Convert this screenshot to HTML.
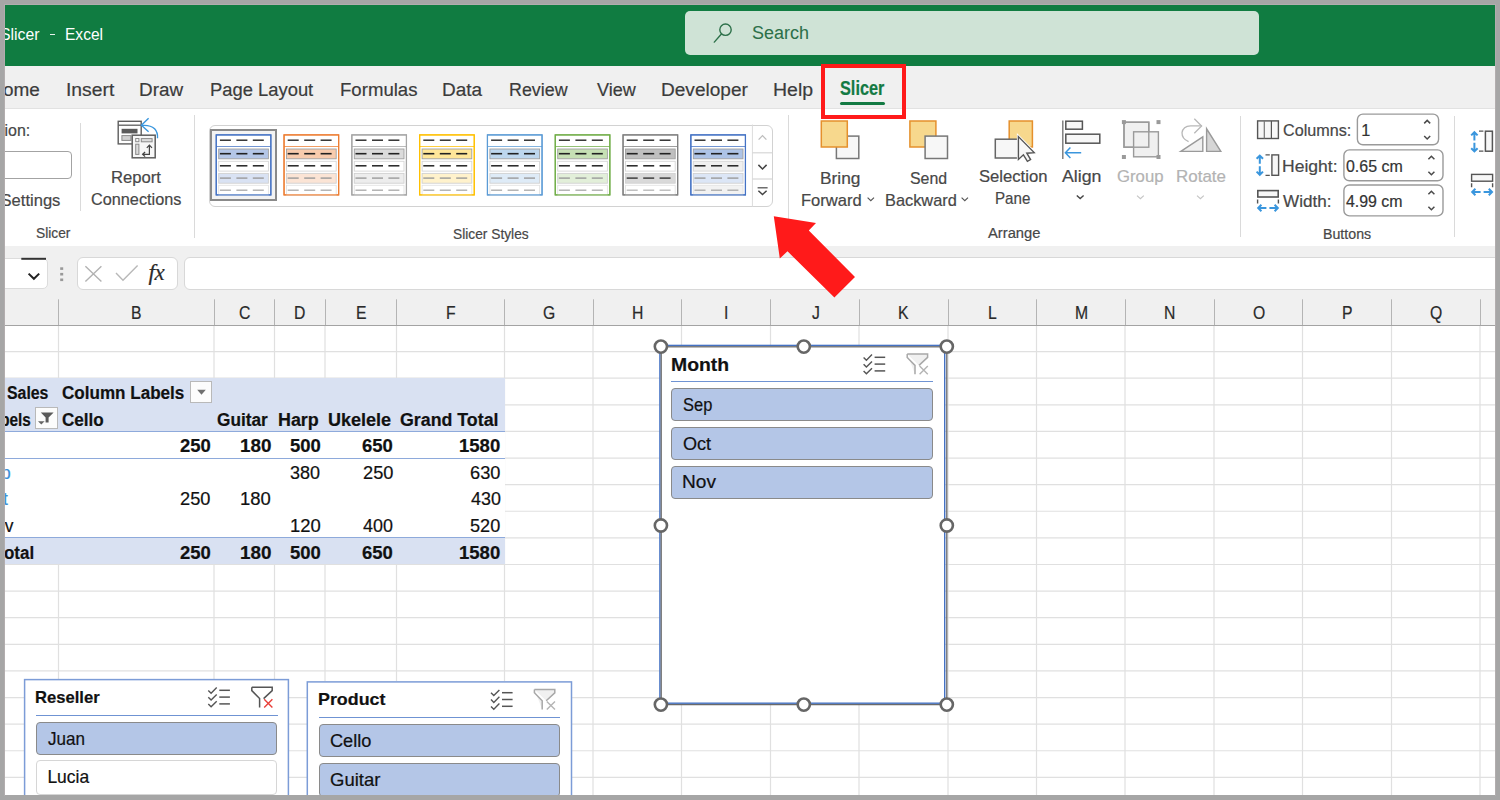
<!DOCTYPE html>
<html><head><meta charset="utf-8"><style>
html,body{margin:0;padding:0;}
body{width:1500px;height:800px;overflow:hidden;background:#a6a6a6;position:relative;font-family:"Liberation Sans",sans-serif;}
#root{position:absolute;left:0;top:0;width:1500px;height:800px;clip-path:inset(5px 5px 5px 5px);background:#fff;overflow:hidden;}
.a{position:absolute;}
.t{position:absolute;white-space:nowrap;font-family:"Liberation Sans",sans-serif;-webkit-text-stroke:0.2px currentColor;}
svg.a{overflow:visible;}
</style></head><body>
<div class="a" style="left:4px;top:4px;width:1492px;height:1px;background:#b2adae"></div>
<div class="a" style="left:4px;top:4px;width:1px;height:792px;background:#b2adae"></div>
<div class="a" style="left:1495px;top:4px;width:1px;height:792px;background:#b2adae"></div>
<div id="root"><div class="a" style="left:0px;top:0px;width:1500px;height:65.5px;background:#107c41"></div><div class="a" style="left:684.5px;top:10.8px;width:574.5px;height:44.6px;background:#cfe3d6;border-radius:5px"></div><svg class="a" style="left:0;top:0" width="1500" height="70"><circle cx="725.5" cy="29.7" r="5.7" fill="none" stroke="#2c7049" stroke-width="1.4"/><line x1="721.4" y1="34" x2="714.3" y2="42.1" stroke="#2c7049" stroke-width="1.4" stroke-linecap="round"/></svg><div class="t" style="left:752.08px;top:23.16px;font-size:19.19px;line-height:19.19px;font-weight:400;color:#2c7049;width:64.79px;transform:scaleX(0.9355);transform-origin:left top;-webkit-text-stroke:0.05px currentColor;">Search</div><div class="t" style="left:0.37px;top:27.05px;font-size:16.72px;line-height:16.72px;font-weight:400;color:#ffffff;width:45.80px;transform:scaleX(0.9474);transform-origin:left top;-webkit-text-stroke:0;">Slicer</div><div class="a" style="left:50px;top:34.2px;width:5px;height:1.3px;background:#e8f2ec"></div><div class="t" style="left:64.65px;top:27.05px;font-size:16.72px;line-height:16.72px;font-weight:400;color:#ffffff;width:44.87px;transform:scaleX(0.9312);transform-origin:left top;-webkit-text-stroke:0;">Excel</div><div class="a" style="left:0px;top:65.5px;width:1500px;height:43.5px;background:#f0f0f0"></div><div class="a" style="left:0px;top:108px;width:1500px;height:1px;background:#e2e2e2"></div><div class="t" style="left:3.24px;top:79.76px;font-size:19.19px;line-height:19.19px;font-weight:400;color:#3b3b3b;width:41.32px;transform:scaleX(0.9895);transform-origin:left top;">ome</div><div class="t" style="left:65.76px;top:79.76px;font-size:19.19px;line-height:19.19px;font-weight:400;color:#3b3b3b;width:51.98px;transform:scaleX(1.0057);transform-origin:left top;">Insert</div><div class="t" style="left:138.99px;top:79.76px;font-size:19.19px;line-height:19.19px;font-weight:400;color:#3b3b3b;width:48.77px;transform:scaleX(0.9848);transform-origin:left top;">Draw</div><div class="t" style="left:210.03px;top:79.76px;font-size:19.19px;line-height:19.19px;font-weight:400;color:#3b3b3b;width:111.74px;transform:scaleX(0.9578);transform-origin:left top;">Page Layout</div><div class="t" style="left:339.81px;top:79.76px;font-size:19.19px;line-height:19.19px;font-weight:400;color:#3b3b3b;width:83.95px;transform:scaleX(0.9692);transform-origin:left top;">Formulas</div><div class="t" style="left:442.48px;top:79.76px;font-size:19.19px;line-height:19.19px;font-weight:400;color:#3b3b3b;width:44.52px;transform:scaleX(0.9888);transform-origin:left top;">Data</div><div class="t" style="left:509.47px;top:79.76px;font-size:19.19px;line-height:19.19px;font-weight:400;color:#3b3b3b;width:66.91px;transform:scaleX(0.9304);transform-origin:left top;">Review</div><div class="t" style="left:596.60px;top:79.76px;font-size:19.19px;line-height:19.19px;font-weight:400;color:#3b3b3b;width:45.24px;transform:scaleX(0.9411);transform-origin:left top;">View</div><div class="t" style="left:661.28px;top:79.76px;font-size:19.19px;line-height:19.19px;font-weight:400;color:#3b3b3b;width:91.45px;transform:scaleX(0.9933);transform-origin:left top;">Developer</div><div class="t" style="left:773.04px;top:79.76px;font-size:19.19px;line-height:19.19px;font-weight:400;color:#3b3b3b;width:43.46px;transform:scaleX(1.0156);transform-origin:left top;">Help</div><div class="t" style="left:840.17px;top:79.37px;font-size:19.77px;line-height:19.77px;font-weight:700;color:#137a43;width:57.85px;transform:scaleX(0.8237);transform-origin:left top;">Slicer</div><div class="a" style="left:840px;top:101.8px;width:45px;height:3.2px;background:#137a43;border-radius:2px"></div><div class="a" style="left:0px;top:109px;width:1500px;height:137px;background:#ffffff"></div><div class="t" style="left:-29.30px;top:123.17px;font-size:15.99px;line-height:15.99px;font-weight:400;color:#474747;width:63.55px;">Caption:</div><div class="a" style="left:-20px;top:151.1px;width:91.8px;height:28.4px;border:1px solid #a3a3a3;border-radius:4px;box-sizing:border-box;background:#fff"></div><div class="t" style="left:-45.48px;top:193.07px;font-size:16.57px;line-height:16.57px;font-weight:400;color:#474747;width:109.90px;">Slicer Settings</div><div class="a" style="left:80.2px;top:123px;width:1px;height:87.6px;background:#dadada"></div><svg class="a" style="left:110px;top:114px" width="52" height="50" viewBox="110 114 52 50">
<rect x="118.2" y="121.3" width="23" height="22.6" fill="#fff" stroke="#5e5e5e" stroke-width="1.4"/>
<line x1="118.2" y1="125.2" x2="141.2" y2="125.2" stroke="#5e5e5e" stroke-width="1.3"/>
<rect x="121.6" y="128.8" width="15.9" height="4.6" fill="#5a5a5a"/>
<rect x="121.9" y="135.6" width="9" height="4.8" fill="#d0d0d0" stroke="#8a8a8a" stroke-width="1"/>
<rect x="132.2" y="135.2" width="23" height="22.6" fill="#f7f7f7" stroke="#5e5e5e" stroke-width="1.5"/>
<rect x="135.7" y="138.5" width="3.2" height="3.2" fill="none" stroke="#8a8a8a" stroke-width="1"/>
<rect x="141.3" y="138.6" width="10.8" height="3.2" fill="#ddd" stroke="#8a8a8a" stroke-width="1"/>
<rect x="135.7" y="144.2" width="3.2" height="10.2" fill="#ddd" stroke="#8a8a8a" stroke-width="1"/>
<path d="M143 154.3 L149.4 154.3 L149.4 145.4 M146.8 147.8 L149.4 145.1 L152 147.8 M145.1 152 L142.6 154.3 L145.1 156.6" fill="none" stroke="#444" stroke-width="1.2"/>
<path d="M141.6 125.5 Q150 124.6 154.6 128.8 Q158 132.5 157.5 138.3" fill="none" stroke="#3a96dd" stroke-width="1.4"/>
<path d="M148.6 118.2 L141.4 125.3 L148.6 131.8" fill="none" stroke="#3a96dd" stroke-width="1.4"/>
</svg><div class="t" style="left:110.72px;top:168.70px;font-size:16.42px;line-height:16.42px;font-weight:400;color:#474747;width:53.29px;transform:scaleX(1.0154);transform-origin:left top;">Report</div><div class="t" style="left:90.59px;top:190.50px;font-size:16.42px;line-height:16.42px;font-weight:400;color:#474747;width:95.30px;transform:scaleX(0.9910);transform-origin:left top;">Connections</div><div class="t" style="left:35.65px;top:226.30px;font-size:14.53px;line-height:14.53px;font-weight:400;color:#474747;width:40.34px;transform:scaleX(0.9492);transform-origin:left top;">Slicer</div><div class="a" style="left:194.3px;top:115.3px;width:1px;height:122.5px;background:#dadada"></div><div class="a" style="left:208.9px;top:124.5px;width:564px;height:82.1px;border:1px solid #d2d2d2;border-radius:6px;box-sizing:border-box;background:#fff"></div><div class="a" style="left:210px;top:129px;width:67px;height:72px;border:2px solid #8a8a8a;box-sizing:border-box;background:#f3f3f3"></div><svg class="a" style="left:200px;top:120px" width="600" height="90" viewBox="200 120 600 90"><rect x="216.25" y="134.9" width="54.60" height="60" fill="#fff" stroke="#4472c4" stroke-width="1.15"/><line x1="216.25" y1="146.5" x2="270.85" y2="146.5" stroke="#4472c4" stroke-width="1" opacity="0.75"/><rect x="218.70" y="149.00" width="49.70" height="9.8" fill="#b4c6e7" stroke="#a0a0a0" stroke-width="0.9"/><rect x="218.70" y="161.30" width="49.70" height="9.8" fill="#ffffff" stroke="#d6d6d6" stroke-width="0.9"/><rect x="218.70" y="173.40" width="49.70" height="9.8" fill="#d9e2f3" stroke="#d0d0d0" stroke-width="0.9"/><rect x="218.70" y="185.30" width="49.70" height="10.0" fill="#ffffff" stroke="#e3e3e3" stroke-width="0.9"/><line x1="219.90" y1="140.2" x2="230.90" y2="140.2" stroke="#222" stroke-width="1.4"/><line x1="236.40" y1="140.2" x2="247.40" y2="140.2" stroke="#222" stroke-width="1.4"/><line x1="252.80" y1="140.2" x2="263.80" y2="140.2" stroke="#222" stroke-width="1.4"/><line x1="219.90" y1="153.7" x2="230.90" y2="153.7" stroke="#222" stroke-width="1.6"/><line x1="236.40" y1="153.7" x2="247.40" y2="153.7" stroke="#222" stroke-width="1.6"/><line x1="252.80" y1="153.7" x2="263.80" y2="153.7" stroke="#222" stroke-width="1.6"/><line x1="219.90" y1="165.8" x2="230.90" y2="165.8" stroke="#222" stroke-width="1.5"/><line x1="236.40" y1="165.8" x2="247.40" y2="165.8" stroke="#222" stroke-width="1.5"/><line x1="252.80" y1="165.8" x2="263.80" y2="165.8" stroke="#222" stroke-width="1.5"/><line x1="219.90" y1="178.1" x2="230.90" y2="178.1" stroke="#9a9a9a" stroke-width="1.4"/><line x1="236.40" y1="178.1" x2="247.40" y2="178.1" stroke="#9a9a9a" stroke-width="1.4"/><line x1="252.80" y1="178.1" x2="263.80" y2="178.1" stroke="#9a9a9a" stroke-width="1.4"/><line x1="219.90" y1="190.2" x2="230.90" y2="190.2" stroke="#a8a8a8" stroke-width="1.3"/><line x1="236.40" y1="190.2" x2="247.40" y2="190.2" stroke="#a8a8a8" stroke-width="1.3"/><line x1="252.80" y1="190.2" x2="263.80" y2="190.2" stroke="#a8a8a8" stroke-width="1.3"/><rect x="216.25" y="134.9" width="54.60" height="60" fill="none" stroke="#4472c4" stroke-width="1.15"/><rect x="284.05" y="134.9" width="54.60" height="60" fill="#fff" stroke="#ed7d31" stroke-width="1.15"/><line x1="284.05" y1="146.5" x2="338.65" y2="146.5" stroke="#ed7d31" stroke-width="1" opacity="0.75"/><rect x="286.50" y="149.00" width="49.70" height="9.8" fill="#f8cbad" stroke="#a0a0a0" stroke-width="0.9"/><rect x="286.50" y="161.30" width="49.70" height="9.8" fill="#ffffff" stroke="#d6d6d6" stroke-width="0.9"/><rect x="286.50" y="173.40" width="49.70" height="9.8" fill="#fbe4d5" stroke="#d0d0d0" stroke-width="0.9"/><rect x="286.50" y="185.30" width="49.70" height="10.0" fill="#ffffff" stroke="#e3e3e3" stroke-width="0.9"/><line x1="287.70" y1="140.2" x2="298.70" y2="140.2" stroke="#222" stroke-width="1.4"/><line x1="304.20" y1="140.2" x2="315.20" y2="140.2" stroke="#222" stroke-width="1.4"/><line x1="320.60" y1="140.2" x2="331.60" y2="140.2" stroke="#222" stroke-width="1.4"/><line x1="287.70" y1="153.7" x2="298.70" y2="153.7" stroke="#222" stroke-width="1.6"/><line x1="304.20" y1="153.7" x2="315.20" y2="153.7" stroke="#222" stroke-width="1.6"/><line x1="320.60" y1="153.7" x2="331.60" y2="153.7" stroke="#222" stroke-width="1.6"/><line x1="287.70" y1="165.8" x2="298.70" y2="165.8" stroke="#222" stroke-width="1.5"/><line x1="304.20" y1="165.8" x2="315.20" y2="165.8" stroke="#222" stroke-width="1.5"/><line x1="320.60" y1="165.8" x2="331.60" y2="165.8" stroke="#222" stroke-width="1.5"/><line x1="287.70" y1="178.1" x2="298.70" y2="178.1" stroke="#9a9a9a" stroke-width="1.4"/><line x1="304.20" y1="178.1" x2="315.20" y2="178.1" stroke="#9a9a9a" stroke-width="1.4"/><line x1="320.60" y1="178.1" x2="331.60" y2="178.1" stroke="#9a9a9a" stroke-width="1.4"/><line x1="287.70" y1="190.2" x2="298.70" y2="190.2" stroke="#a8a8a8" stroke-width="1.3"/><line x1="304.20" y1="190.2" x2="315.20" y2="190.2" stroke="#a8a8a8" stroke-width="1.3"/><line x1="320.60" y1="190.2" x2="331.60" y2="190.2" stroke="#a8a8a8" stroke-width="1.3"/><rect x="284.05" y="134.9" width="54.60" height="60" fill="none" stroke="#ed7d31" stroke-width="1.15"/><rect x="351.85" y="134.9" width="54.60" height="60" fill="#fff" stroke="#a5a5a5" stroke-width="1.15"/><line x1="351.85" y1="146.5" x2="406.45" y2="146.5" stroke="#a5a5a5" stroke-width="1" opacity="0.75"/><rect x="354.30" y="149.00" width="49.70" height="9.8" fill="#dbdbdb" stroke="#a0a0a0" stroke-width="0.9"/><rect x="354.30" y="161.30" width="49.70" height="9.8" fill="#ffffff" stroke="#d6d6d6" stroke-width="0.9"/><rect x="354.30" y="173.40" width="49.70" height="9.8" fill="#ededed" stroke="#d0d0d0" stroke-width="0.9"/><rect x="354.30" y="185.30" width="49.70" height="10.0" fill="#ffffff" stroke="#e3e3e3" stroke-width="0.9"/><line x1="355.50" y1="140.2" x2="366.50" y2="140.2" stroke="#222" stroke-width="1.4"/><line x1="372.00" y1="140.2" x2="383.00" y2="140.2" stroke="#222" stroke-width="1.4"/><line x1="388.40" y1="140.2" x2="399.40" y2="140.2" stroke="#222" stroke-width="1.4"/><line x1="355.50" y1="153.7" x2="366.50" y2="153.7" stroke="#222" stroke-width="1.6"/><line x1="372.00" y1="153.7" x2="383.00" y2="153.7" stroke="#222" stroke-width="1.6"/><line x1="388.40" y1="153.7" x2="399.40" y2="153.7" stroke="#222" stroke-width="1.6"/><line x1="355.50" y1="165.8" x2="366.50" y2="165.8" stroke="#222" stroke-width="1.5"/><line x1="372.00" y1="165.8" x2="383.00" y2="165.8" stroke="#222" stroke-width="1.5"/><line x1="388.40" y1="165.8" x2="399.40" y2="165.8" stroke="#222" stroke-width="1.5"/><line x1="355.50" y1="178.1" x2="366.50" y2="178.1" stroke="#9a9a9a" stroke-width="1.4"/><line x1="372.00" y1="178.1" x2="383.00" y2="178.1" stroke="#9a9a9a" stroke-width="1.4"/><line x1="388.40" y1="178.1" x2="399.40" y2="178.1" stroke="#9a9a9a" stroke-width="1.4"/><line x1="355.50" y1="190.2" x2="366.50" y2="190.2" stroke="#a8a8a8" stroke-width="1.3"/><line x1="372.00" y1="190.2" x2="383.00" y2="190.2" stroke="#a8a8a8" stroke-width="1.3"/><line x1="388.40" y1="190.2" x2="399.40" y2="190.2" stroke="#a8a8a8" stroke-width="1.3"/><rect x="351.85" y="134.9" width="54.60" height="60" fill="none" stroke="#a5a5a5" stroke-width="1.15"/><rect x="419.65" y="134.9" width="54.60" height="60" fill="#fff" stroke="#ffc000" stroke-width="1.15"/><line x1="419.65" y1="146.5" x2="474.25" y2="146.5" stroke="#ffc000" stroke-width="1" opacity="0.75"/><rect x="422.10" y="149.00" width="49.70" height="9.8" fill="#ffe699" stroke="#a0a0a0" stroke-width="0.9"/><rect x="422.10" y="161.30" width="49.70" height="9.8" fill="#ffffff" stroke="#d6d6d6" stroke-width="0.9"/><rect x="422.10" y="173.40" width="49.70" height="9.8" fill="#fff2cc" stroke="#d0d0d0" stroke-width="0.9"/><rect x="422.10" y="185.30" width="49.70" height="10.0" fill="#ffffff" stroke="#e3e3e3" stroke-width="0.9"/><line x1="423.30" y1="140.2" x2="434.30" y2="140.2" stroke="#222" stroke-width="1.4"/><line x1="439.80" y1="140.2" x2="450.80" y2="140.2" stroke="#222" stroke-width="1.4"/><line x1="456.20" y1="140.2" x2="467.20" y2="140.2" stroke="#222" stroke-width="1.4"/><line x1="423.30" y1="153.7" x2="434.30" y2="153.7" stroke="#222" stroke-width="1.6"/><line x1="439.80" y1="153.7" x2="450.80" y2="153.7" stroke="#222" stroke-width="1.6"/><line x1="456.20" y1="153.7" x2="467.20" y2="153.7" stroke="#222" stroke-width="1.6"/><line x1="423.30" y1="165.8" x2="434.30" y2="165.8" stroke="#222" stroke-width="1.5"/><line x1="439.80" y1="165.8" x2="450.80" y2="165.8" stroke="#222" stroke-width="1.5"/><line x1="456.20" y1="165.8" x2="467.20" y2="165.8" stroke="#222" stroke-width="1.5"/><line x1="423.30" y1="178.1" x2="434.30" y2="178.1" stroke="#9a9a9a" stroke-width="1.4"/><line x1="439.80" y1="178.1" x2="450.80" y2="178.1" stroke="#9a9a9a" stroke-width="1.4"/><line x1="456.20" y1="178.1" x2="467.20" y2="178.1" stroke="#9a9a9a" stroke-width="1.4"/><line x1="423.30" y1="190.2" x2="434.30" y2="190.2" stroke="#a8a8a8" stroke-width="1.3"/><line x1="439.80" y1="190.2" x2="450.80" y2="190.2" stroke="#a8a8a8" stroke-width="1.3"/><line x1="456.20" y1="190.2" x2="467.20" y2="190.2" stroke="#a8a8a8" stroke-width="1.3"/><rect x="419.65" y="134.9" width="54.60" height="60" fill="none" stroke="#ffc000" stroke-width="1.15"/><rect x="487.45" y="134.9" width="54.60" height="60" fill="#fff" stroke="#5b9bd5" stroke-width="1.15"/><line x1="487.45" y1="146.5" x2="542.05" y2="146.5" stroke="#5b9bd5" stroke-width="1" opacity="0.75"/><rect x="489.90" y="149.00" width="49.70" height="9.8" fill="#bdd7ee" stroke="#a0a0a0" stroke-width="0.9"/><rect x="489.90" y="161.30" width="49.70" height="9.8" fill="#ffffff" stroke="#d6d6d6" stroke-width="0.9"/><rect x="489.90" y="173.40" width="49.70" height="9.8" fill="#deebf7" stroke="#d0d0d0" stroke-width="0.9"/><rect x="489.90" y="185.30" width="49.70" height="10.0" fill="#ffffff" stroke="#e3e3e3" stroke-width="0.9"/><line x1="491.10" y1="140.2" x2="502.10" y2="140.2" stroke="#222" stroke-width="1.4"/><line x1="507.60" y1="140.2" x2="518.60" y2="140.2" stroke="#222" stroke-width="1.4"/><line x1="524.00" y1="140.2" x2="535.00" y2="140.2" stroke="#222" stroke-width="1.4"/><line x1="491.10" y1="153.7" x2="502.10" y2="153.7" stroke="#222" stroke-width="1.6"/><line x1="507.60" y1="153.7" x2="518.60" y2="153.7" stroke="#222" stroke-width="1.6"/><line x1="524.00" y1="153.7" x2="535.00" y2="153.7" stroke="#222" stroke-width="1.6"/><line x1="491.10" y1="165.8" x2="502.10" y2="165.8" stroke="#222" stroke-width="1.5"/><line x1="507.60" y1="165.8" x2="518.60" y2="165.8" stroke="#222" stroke-width="1.5"/><line x1="524.00" y1="165.8" x2="535.00" y2="165.8" stroke="#222" stroke-width="1.5"/><line x1="491.10" y1="178.1" x2="502.10" y2="178.1" stroke="#9a9a9a" stroke-width="1.4"/><line x1="507.60" y1="178.1" x2="518.60" y2="178.1" stroke="#9a9a9a" stroke-width="1.4"/><line x1="524.00" y1="178.1" x2="535.00" y2="178.1" stroke="#9a9a9a" stroke-width="1.4"/><line x1="491.10" y1="190.2" x2="502.10" y2="190.2" stroke="#a8a8a8" stroke-width="1.3"/><line x1="507.60" y1="190.2" x2="518.60" y2="190.2" stroke="#a8a8a8" stroke-width="1.3"/><line x1="524.00" y1="190.2" x2="535.00" y2="190.2" stroke="#a8a8a8" stroke-width="1.3"/><rect x="487.45" y="134.9" width="54.60" height="60" fill="none" stroke="#5b9bd5" stroke-width="1.15"/><rect x="555.25" y="134.9" width="54.60" height="60" fill="#fff" stroke="#70ad47" stroke-width="1.15"/><line x1="555.25" y1="146.5" x2="609.85" y2="146.5" stroke="#70ad47" stroke-width="1" opacity="0.75"/><rect x="557.70" y="149.00" width="49.70" height="9.8" fill="#c6e0b4" stroke="#a0a0a0" stroke-width="0.9"/><rect x="557.70" y="161.30" width="49.70" height="9.8" fill="#ffffff" stroke="#d6d6d6" stroke-width="0.9"/><rect x="557.70" y="173.40" width="49.70" height="9.8" fill="#e2efd9" stroke="#d0d0d0" stroke-width="0.9"/><rect x="557.70" y="185.30" width="49.70" height="10.0" fill="#ffffff" stroke="#e3e3e3" stroke-width="0.9"/><line x1="558.90" y1="140.2" x2="569.90" y2="140.2" stroke="#222" stroke-width="1.4"/><line x1="575.40" y1="140.2" x2="586.40" y2="140.2" stroke="#222" stroke-width="1.4"/><line x1="591.80" y1="140.2" x2="602.80" y2="140.2" stroke="#222" stroke-width="1.4"/><line x1="558.90" y1="153.7" x2="569.90" y2="153.7" stroke="#222" stroke-width="1.6"/><line x1="575.40" y1="153.7" x2="586.40" y2="153.7" stroke="#222" stroke-width="1.6"/><line x1="591.80" y1="153.7" x2="602.80" y2="153.7" stroke="#222" stroke-width="1.6"/><line x1="558.90" y1="165.8" x2="569.90" y2="165.8" stroke="#222" stroke-width="1.5"/><line x1="575.40" y1="165.8" x2="586.40" y2="165.8" stroke="#222" stroke-width="1.5"/><line x1="591.80" y1="165.8" x2="602.80" y2="165.8" stroke="#222" stroke-width="1.5"/><line x1="558.90" y1="178.1" x2="569.90" y2="178.1" stroke="#9a9a9a" stroke-width="1.4"/><line x1="575.40" y1="178.1" x2="586.40" y2="178.1" stroke="#9a9a9a" stroke-width="1.4"/><line x1="591.80" y1="178.1" x2="602.80" y2="178.1" stroke="#9a9a9a" stroke-width="1.4"/><line x1="558.90" y1="190.2" x2="569.90" y2="190.2" stroke="#a8a8a8" stroke-width="1.3"/><line x1="575.40" y1="190.2" x2="586.40" y2="190.2" stroke="#a8a8a8" stroke-width="1.3"/><line x1="591.80" y1="190.2" x2="602.80" y2="190.2" stroke="#a8a8a8" stroke-width="1.3"/><rect x="555.25" y="134.9" width="54.60" height="60" fill="none" stroke="#70ad47" stroke-width="1.15"/><rect x="623.05" y="134.9" width="54.60" height="60" fill="#fff" stroke="#7f7f7f" stroke-width="1.15"/><line x1="623.05" y1="146.5" x2="677.65" y2="146.5" stroke="#7f7f7f" stroke-width="1" opacity="0.75"/><rect x="625.50" y="149.00" width="49.70" height="9.8" fill="#bfbfbf" stroke="#a0a0a0" stroke-width="0.9"/><rect x="625.50" y="161.30" width="49.70" height="9.8" fill="#ffffff" stroke="#d6d6d6" stroke-width="0.9"/><rect x="625.50" y="173.40" width="49.70" height="9.8" fill="#d9d9d9" stroke="#d0d0d0" stroke-width="0.9"/><rect x="625.50" y="185.30" width="49.70" height="10.0" fill="#ffffff" stroke="#e3e3e3" stroke-width="0.9"/><line x1="626.70" y1="140.2" x2="637.70" y2="140.2" stroke="#222" stroke-width="1.4"/><line x1="643.20" y1="140.2" x2="654.20" y2="140.2" stroke="#222" stroke-width="1.4"/><line x1="659.60" y1="140.2" x2="670.60" y2="140.2" stroke="#222" stroke-width="1.4"/><line x1="626.70" y1="153.7" x2="637.70" y2="153.7" stroke="#222" stroke-width="1.6"/><line x1="643.20" y1="153.7" x2="654.20" y2="153.7" stroke="#222" stroke-width="1.6"/><line x1="659.60" y1="153.7" x2="670.60" y2="153.7" stroke="#222" stroke-width="1.6"/><line x1="626.70" y1="165.8" x2="637.70" y2="165.8" stroke="#222" stroke-width="1.5"/><line x1="643.20" y1="165.8" x2="654.20" y2="165.8" stroke="#222" stroke-width="1.5"/><line x1="659.60" y1="165.8" x2="670.60" y2="165.8" stroke="#222" stroke-width="1.5"/><line x1="626.70" y1="178.1" x2="637.70" y2="178.1" stroke="#333333" stroke-width="1.4"/><line x1="643.20" y1="178.1" x2="654.20" y2="178.1" stroke="#333333" stroke-width="1.4"/><line x1="659.60" y1="178.1" x2="670.60" y2="178.1" stroke="#333333" stroke-width="1.4"/><line x1="626.70" y1="190.2" x2="637.70" y2="190.2" stroke="#b5b5b5" stroke-width="1.3"/><line x1="643.20" y1="190.2" x2="654.20" y2="190.2" stroke="#b5b5b5" stroke-width="1.3"/><line x1="659.60" y1="190.2" x2="670.60" y2="190.2" stroke="#b5b5b5" stroke-width="1.3"/><rect x="623.05" y="134.9" width="54.60" height="60" fill="none" stroke="#7f7f7f" stroke-width="1.15"/><rect x="690.85" y="134.9" width="54.60" height="60" fill="#fff" stroke="#4472c4" stroke-width="1.15"/><line x1="690.85" y1="146.5" x2="745.45" y2="146.5" stroke="#4472c4" stroke-width="1" opacity="0.75"/><rect x="693.30" y="149.00" width="49.70" height="9.8" fill="#adc3e6" stroke="#a0a0a0" stroke-width="0.9"/><rect x="693.30" y="161.30" width="49.70" height="9.8" fill="#f0f0f0" stroke="#d6d6d6" stroke-width="0.9"/><rect x="693.30" y="173.40" width="49.70" height="9.8" fill="#dce6f6" stroke="#d0d0d0" stroke-width="0.9"/><rect x="693.30" y="185.30" width="49.70" height="10.0" fill="#f2f2f2" stroke="#e3e3e3" stroke-width="0.9"/><line x1="694.50" y1="140.2" x2="705.50" y2="140.2" stroke="#222" stroke-width="1.4"/><line x1="711.00" y1="140.2" x2="722.00" y2="140.2" stroke="#222" stroke-width="1.4"/><line x1="727.40" y1="140.2" x2="738.40" y2="140.2" stroke="#222" stroke-width="1.4"/><line x1="694.50" y1="153.7" x2="705.50" y2="153.7" stroke="#222" stroke-width="1.6"/><line x1="711.00" y1="153.7" x2="722.00" y2="153.7" stroke="#222" stroke-width="1.6"/><line x1="727.40" y1="153.7" x2="738.40" y2="153.7" stroke="#222" stroke-width="1.6"/><line x1="694.50" y1="165.8" x2="705.50" y2="165.8" stroke="#222" stroke-width="1.5"/><line x1="711.00" y1="165.8" x2="722.00" y2="165.8" stroke="#222" stroke-width="1.5"/><line x1="727.40" y1="165.8" x2="738.40" y2="165.8" stroke="#222" stroke-width="1.5"/><line x1="694.50" y1="178.1" x2="705.50" y2="178.1" stroke="#9a9a9a" stroke-width="1.4"/><line x1="711.00" y1="178.1" x2="722.00" y2="178.1" stroke="#9a9a9a" stroke-width="1.4"/><line x1="727.40" y1="178.1" x2="738.40" y2="178.1" stroke="#9a9a9a" stroke-width="1.4"/><line x1="694.50" y1="190.2" x2="705.50" y2="190.2" stroke="#a8a8a8" stroke-width="1.3"/><line x1="711.00" y1="190.2" x2="722.00" y2="190.2" stroke="#a8a8a8" stroke-width="1.3"/><line x1="727.40" y1="190.2" x2="738.40" y2="190.2" stroke="#a8a8a8" stroke-width="1.3"/><rect x="690.85" y="134.9" width="54.60" height="60" fill="none" stroke="#4472c4" stroke-width="1.15"/><line x1="752.4" y1="124.5" x2="752.4" y2="206.6" stroke="#dcdcdc" stroke-width="1"/><line x1="752.4" y1="152.8" x2="772.6" y2="152.8" stroke="#d6d6d6" stroke-width="1.2"/><line x1="752.4" y1="179" x2="772.6" y2="179" stroke="#d6d6d6" stroke-width="1.2"/><path d="M758.6 139.6 L762.5 135.6 L766.4 139.6" fill="none" stroke="#bdbdbd" stroke-width="1.3"/><path d="M758.4 164.9 L762.5 169 L766.6 164.9" fill="none" stroke="#444" stroke-width="1.5"/><line x1="757.6" y1="187.8" x2="767.6" y2="187.8" stroke="#555" stroke-width="1.3"/><path d="M758.4 190.8 L762.5 194.6 L766.6 190.8" fill="none" stroke="#444" stroke-width="1.5"/></svg><div class="t" style="left:453.45px;top:226.50px;font-size:14.53px;line-height:14.53px;font-weight:400;color:#474747;width:83.96px;transform:scaleX(0.9477);transform-origin:left top;">Slicer Styles</div><div class="a" style="left:788.1px;top:115.3px;width:1px;height:122.5px;background:#dadada"></div><svg class="a" style="left:790px;top:110px" width="470" height="105" viewBox="790 110 470 105">
<rect x="836.4" y="136.1" width="22.4" height="22.4" fill="#f7f7f7" stroke="#777" stroke-width="1.5"/>
<rect x="821.3" y="121" width="26" height="26" fill="#f7d88d" stroke="#e5902c" stroke-width="1.5"/>
<rect x="909.9" y="121" width="26" height="26" fill="#f7d88d" stroke="#e5902c" stroke-width="1.5"/>
<rect x="925.1" y="136.1" width="22.4" height="22.4" fill="#f7f7f7" stroke="#777" stroke-width="1.5"/>
<rect x="1009.2" y="121" width="23.2" height="26" fill="#f7d88d" stroke="#e5902c" stroke-width="1.5"/>
<rect x="995.3" y="139.2" width="22.6" height="18.8" fill="#f7f7f7" stroke="#666" stroke-width="1.5"/>
<path d="M1018.4 136.6 L1018.4 159.4 L1023.4 154.8 L1027.4 161.4 L1030.6 159.6 L1026.8 153.2 L1034.2 152.6 Z" fill="#f7f7f7" stroke="#fff" stroke-width="3" stroke-linejoin="miter"/>
<path d="M1018.4 136.6 L1018.4 159.4 L1023.4 154.8 L1027.4 161.4 L1030.6 159.6 L1026.8 153.2 L1034.2 152.6 Z" fill="#f7f7f7" stroke="#555" stroke-width="1.4" stroke-linejoin="miter"/>
<line x1="1062.8" y1="120.4" x2="1062.8" y2="159" stroke="#777" stroke-width="1.4"/>
<rect x="1065.8" y="121.2" width="16.6" height="8" fill="#f7f7f7" stroke="#555" stroke-width="1.5"/>
<rect x="1065.8" y="134.2" width="34" height="9" fill="#f7f7f7" stroke="#555" stroke-width="1.5"/>
<path d="M1065.4 152.7 L1081.2 152.7 M1070.4 147.5 L1065.4 152.7 L1070.4 157.9" fill="none" stroke="#3a96dd" stroke-width="1.5"/>
<rect x="1124" y="122.2" width="24.8" height="25" fill="#f0f0f0" stroke="#9a9a9a" stroke-width="1.4"/>
<rect x="1133.6" y="131.8" width="24.8" height="25" fill="#f0f0f0" stroke="none"/><rect x="1124" y="122.2" width="24.8" height="25" fill="none" stroke="#9a9a9a" stroke-width="1.4"/><rect x="1133.6" y="131.8" width="24.8" height="25" fill="none" stroke="#9a9a9a" stroke-width="1.4"/>
<rect x="1121.9" y="120.1" width="4" height="4" fill="#9a9a9a"/><rect x="1156.5" y="120.1" width="4" height="4" fill="#9a9a9a"/>
<rect x="1121.9" y="155" width="4" height="4" fill="#9a9a9a"/><rect x="1156.5" y="155" width="4" height="4" fill="#9a9a9a"/>
<path d="M1180.8 151.4 L1202.8 136.8 L1202.8 151.4 Z" fill="#f0f0f0" stroke="#9a9a9a" stroke-width="1.4" stroke-linejoin="miter"/>
<path d="M1206.6 128.8 L1206.6 151.4 L1220.8 151.4 Z" fill="#d6d6d6" stroke="#9a9a9a" stroke-width="1.4" stroke-linejoin="miter"/>
<path d="M1188.6 141.6 Q1181.8 139 1182 132.6 Q1183 126.2 1190.6 125.8 L1202 125.8" fill="none" stroke="#b8b8b8" stroke-width="1.3"/>
<path d="M1194.3 118.8 L1201.6 126 L1194.3 133.3" fill="none" stroke="#b8b8b8" stroke-width="1.3"/>
<path d="M867.6 197.6 L870.8 200.6 L874 197.6" fill="none" stroke="#555" stroke-width="1.2"/>
<path d="M961.6 197.6 L964.8 200.6 L968 197.6" fill="none" stroke="#555" stroke-width="1.2"/>
<path d="M1076.8 195.4 L1080.2 198.6 L1083.6 195.4" fill="none" stroke="#444" stroke-width="1.4"/>
<path d="M1137 195.6 L1140.4 198.6 L1143.8 195.6" fill="none" stroke="#c4c4c4" stroke-width="1.2"/>
<path d="M1197 195.6 L1200.4 198.6 L1203.8 195.6" fill="none" stroke="#c4c4c4" stroke-width="1.2"/>
</svg><div class="t" style="left:820.21px;top:170.77px;font-size:15.99px;line-height:15.99px;font-weight:400;color:#474747;width:41.32px;transform:scaleX(1.0832);transform-origin:left top;">Bring</div><div class="t" style="left:801.28px;top:192.77px;font-size:15.99px;line-height:15.99px;font-weight:400;color:#474747;width:62.63px;transform:scaleX(1.0347);transform-origin:left top;">Forward</div><div class="t" style="left:910.36px;top:170.77px;font-size:15.99px;line-height:15.99px;font-weight:400;color:#474747;width:41.34px;transform:scaleX(0.9940);transform-origin:left top;">Send</div><div class="t" style="left:884.69px;top:192.77px;font-size:15.99px;line-height:15.99px;font-weight:400;color:#474747;width:74.20px;transform:scaleX(1.0228);transform-origin:left top;">Backward</div><div class="t" style="left:978.93px;top:168.87px;font-size:15.99px;line-height:15.99px;font-weight:400;color:#474747;width:69.77px;transform:scaleX(1.0409);transform-origin:left top;">Selection</div><div class="t" style="left:995.19px;top:190.67px;font-size:15.99px;line-height:15.99px;font-weight:400;color:#474747;width:41.34px;transform:scaleX(0.9466);transform-origin:left top;">Pane</div><div class="t" style="left:1061.50px;top:168.87px;font-size:15.99px;line-height:15.99px;font-weight:400;color:#474747;width:39.55px;transform:scaleX(1.1097);transform-origin:left top;">Align</div><div class="t" style="left:1117.16px;top:168.87px;font-size:15.99px;line-height:15.99px;font-weight:400;color:#b3b3b3;width:48.43px;transform:scaleX(1.0463);transform-origin:left top;">Group</div><div class="t" style="left:1175.64px;top:168.87px;font-size:15.99px;line-height:15.99px;font-weight:400;color:#b3b3b3;width:51.10px;transform:scaleX(1.0608);transform-origin:left top;">Rotate</div><div class="t" style="left:988.00px;top:226.10px;font-size:14.53px;line-height:14.53px;font-weight:400;color:#474747;width:55.71px;transform:scaleX(1.0164);transform-origin:left top;">Arrange</div><div class="a" style="left:1240.4px;top:115.9px;width:1px;height:121.3px;background:#dadada"></div><svg class="a" style="left:1330px;top:105px" width="130" height="120" viewBox="1330 105 130 120"><rect x="1357.4" y="114.1" width="81.2" height="30.7" rx="5.5" fill="#fff" stroke="#9a9a9a" stroke-width="1.4"/><rect x="1343.9" y="149.9" width="99.1" height="30.9" rx="5.5" fill="#fff" stroke="#9a9a9a" stroke-width="1.4"/><rect x="1343.9" y="185" width="99.1" height="30.9" rx="5.5" fill="#fff" stroke="#9a9a9a" stroke-width="1.4"/></svg><div class="t" style="left:1282.59px;top:122.42px;font-size:16.28px;line-height:16.28px;font-weight:400;color:#474747;width:72.75px;transform:scaleX(0.9943);transform-origin:left top;">Columns:</div><div class="t" style="left:1361.36px;top:122.42px;font-size:16.28px;line-height:16.28px;font-weight:400;color:#333;width:13.05px;">1</div><div class="t" style="left:1282.00px;top:157.82px;font-size:16.28px;line-height:16.28px;font-weight:400;color:#474747;width:55.58px;transform:scaleX(1.0770);transform-origin:left top;">Height:</div><div class="t" style="left:1346.22px;top:157.82px;font-size:16.28px;line-height:16.28px;font-weight:400;color:#333;width:61.90px;transform:scaleX(0.9800);transform-origin:left top;">0.65 cm</div><div class="t" style="left:1283.40px;top:193.22px;font-size:16.28px;line-height:16.28px;font-weight:400;color:#474747;width:50.13px;transform:scaleX(1.0521);transform-origin:left top;">Width:</div><div class="t" style="left:1346.38px;top:193.22px;font-size:16.28px;line-height:16.28px;font-weight:400;color:#333;width:61.90px;transform:scaleX(0.9772);transform-origin:left top;">4.99 cm</div><div class="t" style="left:1322.66px;top:226.70px;font-size:14.53px;line-height:14.53px;font-weight:400;color:#474747;width:53.29px;transform:scaleX(0.9775);transform-origin:left top;">Buttons</div><div class="a" style="left:1454.3px;top:115.9px;width:1px;height:121.3px;background:#dadada"></div><svg class="a" style="left:1250px;top:110px" width="250" height="110" viewBox="1250 110 250 110">
<rect x="1257.6" y="120.9" width="20.8" height="17.6" fill="#f7f7f7" stroke="#555" stroke-width="1.4"/>
<line x1="1264.3" y1="120.9" x2="1264.3" y2="138.5" stroke="#777" stroke-width="1.2"/>
<line x1="1271.4" y1="120.9" x2="1271.4" y2="138.5" stroke="#555" stroke-width="1.2"/>
<rect x="1271.9" y="154.9" width="6.7" height="20.4" fill="#f7f7f7" stroke="#555" stroke-width="1.4"/>
<path d="M1265.5 154.9 L1269.8 154.9 M1265.5 175.3 L1269.8 175.3" stroke="#555" stroke-width="1.3"/>
<path d="M1259.8 156 L1259.8 163.8 M1259.8 166.2 L1259.8 174.4 M1256.6 158.8 L1259.8 155.6 L1263 158.8 M1256.6 171.6 L1259.8 174.8 L1263 171.6" fill="none" stroke="#3a96dd" stroke-width="2"/>
<rect x="1257.8" y="190.6" width="20.4" height="6.4" fill="#f7f7f7" stroke="#555" stroke-width="1.6"/>
<path d="M1257.6 199.4 L1257.6 203.4 M1278.4 199.4 L1278.4 203.4" stroke="#555" stroke-width="1.4"/>
<path d="M1258.4 208 L1266.4 208 M1269.4 208 L1277.6 208 M1261.4 204.8 L1258.2 208 L1261.4 211.2 M1274.6 204.8 L1277.8 208 L1274.6 211.2" fill="none" stroke="#3a96dd" stroke-width="2"/>
<rect x="1485.4" y="131.2" width="7" height="20" fill="#f7f7f7" stroke="#555" stroke-width="1.5"/>
<path d="M1479 131.2 L1483.4 131.2 M1479 151.2 L1483.4 151.2" stroke="#555" stroke-width="1.3"/>
<path d="M1474.4 132.6 L1474.4 140.4 M1474.4 142.8 L1474.4 151 M1471.2 135.4 L1474.4 132.2 L1477.6 135.4 M1471.2 148.2 L1474.4 151.4 L1477.6 148.2" fill="none" stroke="#3a96dd" stroke-width="2"/>
<rect x="1471.6" y="174.4" width="21" height="6.8" fill="#f7f7f7" stroke="#555" stroke-width="1.4"/>
<path d="M1471.6 183.2 L1471.6 187.2 M1492.6 183.2 L1492.6 187.2" stroke="#555" stroke-width="1.4"/>
<path d="M1472.4 192 L1480.6 192 M1483.6 192 L1491.8 192 M1475.4 188.8 L1472.2 192 L1475.4 195.2 M1488.8 188.8 L1492 192 L1488.8 195.2" fill="none" stroke="#3a96dd" stroke-width="2"/>
<path d="M1424.2 123.4 L1427.2 120.4 L1430.2 123.4 M1424.2 136 L1427.2 139 L1430.2 136" fill="none" stroke="#4a4a4a" stroke-width="1.5"/>
<path d="M1428.4 159.2 L1431.4 156.2 L1434.4 159.2 M1428.4 171.8 L1431.4 174.8 L1434.4 171.8" fill="none" stroke="#4a4a4a" stroke-width="1.5"/>
<path d="M1428.4 194.2 L1431.4 191.2 L1434.4 194.2 M1428.4 206.8 L1431.4 209.8 L1434.4 206.8" fill="none" stroke="#4a4a4a" stroke-width="1.5"/>
</svg><div class="a" style="left:0px;top:246px;width:1500px;height:79px;background:#f0f0f0"></div><div class="a" style="left:-20px;top:257.5px;width:67.5px;height:31.9px;background:#fff;border:1px solid #dcdcdc;border-radius:5px;box-sizing:border-box"></div><div class="a" style="left:76.5px;top:257.4px;width:101px;height:32.5px;background:#fff;border:1px solid #d8d8d8;border-radius:6px;box-sizing:border-box"></div><div class="a" style="left:183.5px;top:257.4px;width:1400px;height:32.5px;background:#fff;border:1px solid #d8d8d8;border-radius:6px;box-sizing:border-box"></div><svg class="a" style="left:0;top:250px" width="200" height="45" viewBox="0 250 200 45">
<line x1="21.3" y1="258.8" x2="46" y2="258.8" stroke="#333" stroke-width="2"/>
<path d="M28.6 273.6 L33.9 278.8 L39.2 273.6" fill="none" stroke="#222" stroke-width="2"/>
<rect x="60.2" y="267.3" width="3" height="2.6" fill="#999"/><rect x="60.2" y="272.9" width="3" height="2.6" fill="#999"/><rect x="60.2" y="278.5" width="3" height="2.6" fill="#999"/>
<path d="M85.4 266.2 L101.4 281.4 M101.4 266.2 L85.4 281.4" stroke="#b2b2b2" stroke-width="1.4"/>
<path d="M116 273 L123 280.2 L137.6 265.6" fill="none" stroke="#b8b8b8" stroke-width="1.4"/>
</svg><div class="t" style="left:148.5px;top:261px;font-family:'Liberation Serif',serif;font-style:italic;font-size:23px;line-height:23px;color:#2b2b2b;letter-spacing:-0.5px">fx</div><div class="a" style="left:0px;top:325px;width:1500px;height:1px;background:#a3a3a3"></div><svg class="a" style="left:0;top:290px" width="1500" height="40" viewBox="0 290 1500 40"><line x1="58.5" y1="299.3" x2="58.5" y2="325" stroke="#b4b4b4" stroke-width="1"/><line x1="214.5" y1="299.3" x2="214.5" y2="325" stroke="#b4b4b4" stroke-width="1"/><line x1="274.5" y1="299.3" x2="274.5" y2="325" stroke="#b4b4b4" stroke-width="1"/><line x1="325.5" y1="299.3" x2="325.5" y2="325" stroke="#b4b4b4" stroke-width="1"/><line x1="396.5" y1="299.3" x2="396.5" y2="325" stroke="#b4b4b4" stroke-width="1"/><line x1="504.5" y1="299.3" x2="504.5" y2="325" stroke="#b4b4b4" stroke-width="1"/><line x1="593.5" y1="299.3" x2="593.5" y2="325" stroke="#b4b4b4" stroke-width="1"/><line x1="681.5" y1="299.3" x2="681.5" y2="325" stroke="#b4b4b4" stroke-width="1"/><line x1="770.5" y1="299.3" x2="770.5" y2="325" stroke="#b4b4b4" stroke-width="1"/><line x1="859.5" y1="299.3" x2="859.5" y2="325" stroke="#b4b4b4" stroke-width="1"/><line x1="948.5" y1="299.3" x2="948.5" y2="325" stroke="#b4b4b4" stroke-width="1"/><line x1="1036.5" y1="299.3" x2="1036.5" y2="325" stroke="#b4b4b4" stroke-width="1"/><line x1="1125.5" y1="299.3" x2="1125.5" y2="325" stroke="#b4b4b4" stroke-width="1"/><line x1="1214.5" y1="299.3" x2="1214.5" y2="325" stroke="#b4b4b4" stroke-width="1"/><line x1="1302.5" y1="299.3" x2="1302.5" y2="325" stroke="#b4b4b4" stroke-width="1"/><line x1="1391.5" y1="299.3" x2="1391.5" y2="325" stroke="#b4b4b4" stroke-width="1"/><line x1="1480.5" y1="299.3" x2="1480.5" y2="325" stroke="#b4b4b4" stroke-width="1"/></svg><div class="t" style="left:131.34px;top:304.10px;font-size:18.31px;line-height:18.31px;font-weight:400;color:#2a2a2a;width:16.22px;transform:scaleX(0.8600);transform-origin:left top;">B</div><div class="t" style="left:239.02px;top:304.10px;font-size:18.31px;line-height:18.31px;font-weight:400;color:#2a2a2a;width:17.23px;transform:scaleX(0.8600);transform-origin:left top;">C</div><div class="t" style="left:294.37px;top:304.10px;font-size:18.31px;line-height:18.31px;font-weight:400;color:#2a2a2a;width:17.23px;transform:scaleX(0.8600);transform-origin:left top;">D</div><div class="t" style="left:355.76px;top:304.10px;font-size:18.31px;line-height:18.31px;font-weight:400;color:#2a2a2a;width:16.22px;transform:scaleX(0.8600);transform-origin:left top;">E</div><div class="t" style="left:445.90px;top:304.10px;font-size:18.31px;line-height:18.31px;font-weight:400;color:#2a2a2a;width:15.19px;transform:scaleX(0.8600);transform-origin:left top;">F</div><div class="t" style="left:543.37px;top:304.10px;font-size:18.31px;line-height:18.31px;font-weight:400;color:#2a2a2a;width:18.24px;transform:scaleX(0.8600);transform-origin:left top;">G</div><div class="t" style="left:632.10px;top:304.10px;font-size:18.31px;line-height:18.31px;font-weight:400;color:#2a2a2a;width:17.23px;transform:scaleX(0.8600);transform-origin:left top;">H</div><div class="t" style="left:724.39px;top:304.10px;font-size:18.31px;line-height:18.31px;font-weight:400;color:#2a2a2a;width:9.09px;transform:scaleX(0.8600);transform-origin:left top;">I</div><div class="t" style="left:811.88px;top:304.10px;font-size:18.31px;line-height:18.31px;font-weight:400;color:#2a2a2a;width:13.16px;transform:scaleX(0.8600);transform-origin:left top;">J</div><div class="t" style="left:898.27px;top:304.10px;font-size:18.31px;line-height:18.31px;font-weight:400;color:#2a2a2a;width:16.22px;transform:scaleX(0.8600);transform-origin:left top;">K</div><div class="t" style="left:988.05px;top:304.10px;font-size:18.31px;line-height:18.31px;font-weight:400;color:#2a2a2a;width:14.18px;transform:scaleX(0.8600);transform-origin:left top;">L</div><div class="t" style="left:1074.73px;top:304.10px;font-size:18.31px;line-height:18.31px;font-weight:400;color:#2a2a2a;width:19.25px;transform:scaleX(0.8600);transform-origin:left top;">M</div><div class="t" style="left:1164.35px;top:304.10px;font-size:18.31px;line-height:18.31px;font-weight:400;color:#2a2a2a;width:17.23px;transform:scaleX(0.8600);transform-origin:left top;">N</div><div class="t" style="left:1252.79px;top:304.10px;font-size:18.31px;line-height:18.31px;font-weight:400;color:#2a2a2a;width:18.24px;transform:scaleX(0.8600);transform-origin:left top;">O</div><div class="t" style="left:1342.09px;top:304.10px;font-size:18.31px;line-height:18.31px;font-weight:400;color:#2a2a2a;width:16.22px;transform:scaleX(0.8600);transform-origin:left top;">P</div><div class="t" style="left:1430.29px;top:304.10px;font-size:18.31px;line-height:18.31px;font-weight:400;color:#2a2a2a;width:18.24px;transform:scaleX(0.8600);transform-origin:left top;">Q</div><svg class="a" style="left:0;top:320px" width="1500" height="480" viewBox="0 320 1500 480"><line x1="58.5" y1="326" x2="58.5" y2="800" stroke="#e0e0e0" stroke-width="1.2"/><line x1="214" y1="326" x2="214" y2="800" stroke="#e0e0e0" stroke-width="1.2"/><line x1="274.5" y1="326" x2="274.5" y2="800" stroke="#e0e0e0" stroke-width="1.2"/><line x1="325" y1="326" x2="325" y2="800" stroke="#e0e0e0" stroke-width="1.2"/><line x1="396.5" y1="326" x2="396.5" y2="800" stroke="#e0e0e0" stroke-width="1.2"/><line x1="504.5" y1="326" x2="504.5" y2="800" stroke="#e0e0e0" stroke-width="1.2"/><line x1="593" y1="326" x2="593" y2="800" stroke="#e0e0e0" stroke-width="1.2"/><line x1="681.5" y1="326" x2="681.5" y2="800" stroke="#e0e0e0" stroke-width="1.2"/><line x1="770.5" y1="326" x2="770.5" y2="800" stroke="#e0e0e0" stroke-width="1.2"/><line x1="859" y1="326" x2="859" y2="800" stroke="#e0e0e0" stroke-width="1.2"/><line x1="948" y1="326" x2="948" y2="800" stroke="#e0e0e0" stroke-width="1.2"/><line x1="1036.5" y1="326" x2="1036.5" y2="800" stroke="#e0e0e0" stroke-width="1.2"/><line x1="1125" y1="326" x2="1125" y2="800" stroke="#e0e0e0" stroke-width="1.2"/><line x1="1214" y1="326" x2="1214" y2="800" stroke="#e0e0e0" stroke-width="1.2"/><line x1="1302.5" y1="326" x2="1302.5" y2="800" stroke="#e0e0e0" stroke-width="1.2"/><line x1="1391.5" y1="326" x2="1391.5" y2="800" stroke="#e0e0e0" stroke-width="1.2"/><line x1="1480" y1="326" x2="1480" y2="800" stroke="#e0e0e0" stroke-width="1.2"/><line x1="0" y1="351.61" x2="1500" y2="351.61" stroke="#e0e0e0" stroke-width="1.2"/><line x1="0" y1="378.22" x2="1500" y2="378.22" stroke="#e0e0e0" stroke-width="1.2"/><line x1="0" y1="404.83" x2="1500" y2="404.83" stroke="#e0e0e0" stroke-width="1.2"/><line x1="0" y1="431.44" x2="1500" y2="431.44" stroke="#e0e0e0" stroke-width="1.2"/><line x1="0" y1="458.05" x2="1500" y2="458.05" stroke="#e0e0e0" stroke-width="1.2"/><line x1="0" y1="484.66" x2="1500" y2="484.66" stroke="#e0e0e0" stroke-width="1.2"/><line x1="0" y1="511.27" x2="1500" y2="511.27" stroke="#e0e0e0" stroke-width="1.2"/><line x1="0" y1="537.88" x2="1500" y2="537.88" stroke="#e0e0e0" stroke-width="1.2"/><line x1="0" y1="564.49" x2="1500" y2="564.49" stroke="#e0e0e0" stroke-width="1.2"/><line x1="0" y1="591.10" x2="1500" y2="591.10" stroke="#e0e0e0" stroke-width="1.2"/><line x1="0" y1="617.71" x2="1500" y2="617.71" stroke="#e0e0e0" stroke-width="1.2"/><line x1="0" y1="644.32" x2="1500" y2="644.32" stroke="#e0e0e0" stroke-width="1.2"/><line x1="0" y1="670.93" x2="1500" y2="670.93" stroke="#e0e0e0" stroke-width="1.2"/><line x1="0" y1="697.54" x2="1500" y2="697.54" stroke="#e0e0e0" stroke-width="1.2"/><line x1="0" y1="724.15" x2="1500" y2="724.15" stroke="#e0e0e0" stroke-width="1.2"/><line x1="0" y1="750.76" x2="1500" y2="750.76" stroke="#e0e0e0" stroke-width="1.2"/><line x1="0" y1="777.37" x2="1500" y2="777.37" stroke="#e0e0e0" stroke-width="1.2"/><line x1="0" y1="803.98" x2="1500" y2="803.98" stroke="#e0e0e0" stroke-width="1.2"/></svg><div class="a" style="left:0px;top:378.22px;width:504.5px;height:53.21999999999997px;background:#d9e1f2"></div><div class="a" style="left:0px;top:431.44px;width:504.5px;height:106.44px;background:#fff"></div><div class="a" style="left:0px;top:537.88px;width:504.5px;height:26.610000000000014px;background:#d9e1f2"></div><div class="a" style="left:0px;top:431px;width:504.5px;height:1px;background:#8eaadb"></div><div class="a" style="left:0px;top:458px;width:504.5px;height:1px;background:#8eaadb"></div><div class="a" style="left:0px;top:537px;width:504.5px;height:1px;background:#8eaadb"></div><div class="a" style="left:190.3px;top:380.7px;width:22px;height:22.3px;background:#fcfcfc;border:1px solid #b9b9b9;box-sizing:border-box"></div><div class="a" style="left:35px;top:407.2px;width:22.6px;height:22.3px;background:#fcfcfc;border:1px solid #b9b9b9;box-sizing:border-box"></div><svg class="a" style="left:0;top:370px" width="230" height="70" viewBox="0 370 230 70">
<path d="M197.2 389.8 L205.8 389.8 L201.5 394.8 Z" fill="#6f6f6f"/>
<path d="M40.8 412.4 L53.6 412.4 L48.6 417.6 L48.6 422.6 L45.6 422.6 L45.6 417.6 Z" fill="#5a5a5a"/>
<path d="M38 421.2 L44.6 421.2 L41.3 424.4 Z" fill="#666"/>
</svg><div class="t" style="left:6.58px;top:385.04px;font-size:17.44px;line-height:17.44px;font-weight:700;color:#111;width:49.58px;transform:scaleX(0.9093);transform-origin:left top;">Sales</div><div class="t" style="left:61.92px;top:385.04px;font-size:17.44px;line-height:17.44px;font-weight:700;color:#111;width:129.01px;transform:scaleX(0.9785);transform-origin:left top;">Column Labels</div><div class="t" style="left:-54.26px;top:411.64px;font-size:17.44px;line-height:17.44px;font-weight:700;color:#111;width:100.91px;transform:scaleX(0.8752);transform-origin:left top;">Row Labels</div><div class="t" style="left:61.92px;top:411.64px;font-size:17.44px;line-height:17.44px;font-weight:700;color:#111;width:46.64px;transform:scaleX(0.9797);transform-origin:left top;">Cello</div><div class="t" style="left:217.31px;top:411.64px;font-size:17.44px;line-height:17.44px;font-weight:700;color:#111;width:55.36px;transform:scaleX(0.9885);transform-origin:left top;">Guitar</div><div class="t" style="left:277.93px;top:411.64px;font-size:17.44px;line-height:17.44px;font-weight:700;color:#111;width:43.74px;transform:scaleX(1.0257);transform-origin:left top;">Harp</div><div class="t" style="left:327.52px;top:411.64px;font-size:17.44px;line-height:17.44px;font-weight:700;color:#111;width:65.08px;transform:scaleX(1.0327);transform-origin:left top;">Ukelele</div><div class="t" style="left:400.29px;top:411.64px;font-size:17.44px;line-height:17.44px;font-weight:700;color:#111;width:100.57px;transform:scaleX(1.0200);transform-origin:left top;">Grand Total</div><div class="t" style="left:179.54px;top:438.24px;font-size:17.44px;line-height:17.44px;font-weight:700;color:#111;width:33.10px;transform:scaleX(1.0607);transform-origin:left top;">250</div><div class="t" style="left:239.67px;top:438.24px;font-size:17.44px;line-height:17.44px;font-weight:700;color:#111;width:33.10px;transform:scaleX(1.0809);transform-origin:left top;">180</div><div class="t" style="left:290.45px;top:438.24px;font-size:17.44px;line-height:17.44px;font-weight:700;color:#111;width:33.10px;transform:scaleX(1.0607);transform-origin:left top;">500</div><div class="t" style="left:362.25px;top:438.24px;font-size:17.44px;line-height:17.44px;font-weight:700;color:#111;width:33.10px;transform:scaleX(1.0607);transform-origin:left top;">650</div><div class="t" style="left:459.19px;top:438.24px;font-size:17.44px;line-height:17.44px;font-weight:700;color:#111;width:42.80px;transform:scaleX(1.0632);transform-origin:left top;">1580</div><div class="t" style="left:290.46px;top:464.84px;font-size:17.44px;line-height:17.44px;font-weight:400;color:#111;width:33.10px;transform:scaleX(1.0320);transform-origin:left top;">380</div><div class="t" style="left:362.69px;top:464.84px;font-size:17.44px;line-height:17.44px;font-weight:400;color:#111;width:33.10px;transform:scaleX(1.0451);transform-origin:left top;">250</div><div class="t" style="left:470.09px;top:464.84px;font-size:17.44px;line-height:17.44px;font-weight:400;color:#111;width:33.10px;transform:scaleX(1.0451);transform-origin:left top;">630</div><div class="t" style="left:179.99px;top:491.44px;font-size:17.44px;line-height:17.44px;font-weight:400;color:#111;width:33.10px;transform:scaleX(1.0451);transform-origin:left top;">250</div><div class="t" style="left:240.31px;top:491.44px;font-size:17.44px;line-height:17.44px;font-weight:400;color:#111;width:33.10px;transform:scaleX(1.0585);transform-origin:left top;">180</div><div class="t" style="left:470.64px;top:491.44px;font-size:17.44px;line-height:17.44px;font-weight:400;color:#111;width:33.10px;transform:scaleX(1.0256);transform-origin:left top;">430</div><div class="t" style="left:289.71px;top:518.04px;font-size:17.44px;line-height:17.44px;font-weight:400;color:#111;width:33.10px;transform:scaleX(1.0585);transform-origin:left top;">120</div><div class="t" style="left:363.24px;top:518.04px;font-size:17.44px;line-height:17.44px;font-weight:400;color:#111;width:33.10px;transform:scaleX(1.0256);transform-origin:left top;">400</div><div class="t" style="left:470.28px;top:518.04px;font-size:17.44px;line-height:17.44px;font-weight:400;color:#111;width:33.10px;transform:scaleX(1.0385);transform-origin:left top;">520</div><div class="t" style="left:4.49px;top:544.64px;font-size:17.44px;line-height:17.44px;font-weight:700;color:#111;width:35.01px;transform:scaleX(0.9726);transform-origin:left top;">otal</div><div class="t" style="left:179.54px;top:544.64px;font-size:17.44px;line-height:17.44px;font-weight:700;color:#111;width:33.10px;transform:scaleX(1.0607);transform-origin:left top;">250</div><div class="t" style="left:239.67px;top:544.64px;font-size:17.44px;line-height:17.44px;font-weight:700;color:#111;width:33.10px;transform:scaleX(1.0809);transform-origin:left top;">180</div><div class="t" style="left:290.45px;top:544.64px;font-size:17.44px;line-height:17.44px;font-weight:700;color:#111;width:33.10px;transform:scaleX(1.0607);transform-origin:left top;">500</div><div class="t" style="left:362.25px;top:544.64px;font-size:17.44px;line-height:17.44px;font-weight:700;color:#111;width:33.10px;transform:scaleX(1.0607);transform-origin:left top;">650</div><div class="t" style="left:459.19px;top:544.64px;font-size:17.44px;line-height:17.44px;font-weight:700;color:#111;width:42.80px;transform:scaleX(1.0632);transform-origin:left top;">1580</div><div class="t" style="left:-20.35px;top:464.84px;font-size:17.44px;line-height:17.44px;font-weight:400;color:#3a8fd8;width:35.03px;">Sep</div><div class="t" style="left:-19.21px;top:491.44px;font-size:17.44px;line-height:17.44px;font-weight:400;color:#3a8fd8;width:31.13px;">Oct</div><div class="t" style="left:-17.55px;top:518.04px;font-size:17.44px;line-height:17.44px;font-weight:400;color:#111;width:35.02px;">Nov</div><div class="a" style="left:659.5px;top:345px;width:285.5px;height:358.5px;background:#fff"></div><div class="t" style="left:670.84px;top:355.54px;font-size:18.02px;line-height:18.02px;font-weight:700;color:#111;width:58.04px;transform:scaleX(1.0750);transform-origin:left top;">Month</div><div class="a" style="left:671.1px;top:381.2px;width:261.7px;height:1.3px;background:#6f93d3"></div><div class="a" style="left:671.1px;top:388.4px;width:261.69999999999993px;height:33.10000000000002px;background:#b4c6e7;border:1px solid #8a8a8a;border-radius:4px;box-sizing:border-box;"></div><div class="t" style="left:683.34px;top:396.64px;font-size:17.44px;line-height:17.44px;font-weight:400;color:#111;width:35.03px;transform:scaleX(0.9443);transform-origin:left top;">Sep</div><div class="a" style="left:671.1px;top:427.3px;width:261.69999999999993px;height:33.19999999999999px;background:#b4c6e7;border:1px solid #8a8a8a;border-radius:4px;box-sizing:border-box;"></div><div class="t" style="left:683.28px;top:435.64px;font-size:17.44px;line-height:17.44px;font-weight:400;color:#111;width:31.13px;transform:scaleX(1.0373);transform-origin:left top;">Oct</div><div class="a" style="left:671.1px;top:465.8px;width:261.69999999999993px;height:33.5px;background:#b4c6e7;border:1px solid #8a8a8a;border-radius:4px;box-sizing:border-box;"></div><div class="t" style="left:682.47px;top:474.34px;font-size:17.44px;line-height:17.44px;font-weight:400;color:#111;width:35.02px;transform:scaleX(1.0961);transform-origin:left top;">Nov</div><svg class="a" style="left:640px;top:330px" width="330" height="390" viewBox="640 330 330 390"><rect x="659.9" y="345.4" width="284.8" height="357.8" fill="none" stroke="#4472c4" stroke-width="1.4"/><rect x="661.2" y="346.8" width="285.6" height="357.8" fill="none" stroke="#6a6a6a" stroke-width="1.3"/><path d="M863.60 357.40 L866.40 360.20 L872.00 354.60 M863.60 364.20 L866.40 367.00 L872.00 361.40 M863.60 371.00 L866.40 373.80 L872.00 368.20" fill="none" stroke="#555" stroke-width="1.4"/><line x1="874.60" y1="357.30" x2="885.20" y2="357.30" stroke="#555" stroke-width="1.5"/><line x1="874.60" y1="364.10" x2="885.20" y2="364.10" stroke="#555" stroke-width="1.5"/><line x1="874.60" y1="370.90" x2="885.20" y2="370.90" stroke="#555" stroke-width="1.5"/><path d="M907.20 354.00 L927.60 354.00 L927.60 357.40 L919.00 365.40 M907.20 354.00 L907.20 357.40 L915.00 365.40 L915.00 374.20" fill="#f0f0f0" stroke="#a8a8a8" stroke-width="1.5"/><path d="M919.60 366.00 L927.80 374.20 M927.80 366.00 L919.60 374.20" stroke="#b4b4b4" stroke-width="1.4"/><circle cx="660.9" cy="346.6" r="6.1" fill="#fff" stroke="#666" stroke-width="2.6"/><circle cx="660.9" cy="525.5" r="6.1" fill="#fff" stroke="#666" stroke-width="2.6"/><circle cx="660.9" cy="704.6" r="6.1" fill="#fff" stroke="#666" stroke-width="2.6"/><circle cx="803.8" cy="346.6" r="6.1" fill="#fff" stroke="#666" stroke-width="2.6"/><circle cx="803.8" cy="704.6" r="6.1" fill="#fff" stroke="#666" stroke-width="2.6"/><circle cx="946.8" cy="346.6" r="6.1" fill="#fff" stroke="#666" stroke-width="2.6"/><circle cx="946.8" cy="525.5" r="6.1" fill="#fff" stroke="#666" stroke-width="2.6"/><circle cx="946.8" cy="704.6" r="6.1" fill="#fff" stroke="#666" stroke-width="2.6"/></svg><div class="a" style="left:23.9px;top:678.9px;width:265.1px;height:130px;background:#fff"></div><div class="t" style="left:35.10px;top:690.33px;font-size:16.86px;line-height:16.86px;font-weight:700;color:#111;width:69.61px;transform:scaleX(0.9844);transform-origin:left top;">Reseller</div><div class="a" style="left:36px;top:714.9px;width:241.6px;height:1.3px;background:#6f93d3"></div><div class="a" style="left:36px;top:722px;width:241.10000000000002px;height:33.39999999999998px;background:#b4c6e7;border:1px solid #8a8a8a;border-radius:4px;box-sizing:border-box;"></div><div class="t" style="left:48.13px;top:730.84px;font-size:17.44px;line-height:17.44px;font-weight:400;color:#111;width:41.82px;transform:scaleX(0.9774);transform-origin:left top;">Juan</div><div class="a" style="left:36px;top:760.2px;width:241.10000000000002px;height:34.39999999999998px;background:#ffffff;border:1px solid #d6d6d6;border-radius:4px;box-sizing:border-box;"></div><div class="t" style="left:47.41px;top:769.04px;font-size:17.44px;line-height:17.44px;font-weight:400;color:#111;width:45.69px;">Lucia</div><div class="a" style="left:306.6px;top:681.2px;width:265.5px;height:130px;background:#fff"></div><svg class="a" style="left:0;top:660px" width="600" height="140" viewBox="0 660 600 140"><rect x="24.6" y="679.6" width="263.8" height="130" fill="none" stroke="#7c9cd7" stroke-width="1.5"/><rect x="307.3" y="681.9" width="264.2" height="130" fill="none" stroke="#7c9cd7" stroke-width="1.5"/></svg><div class="t" style="left:317.93px;top:692.33px;font-size:16.86px;line-height:16.86px;font-weight:700;color:#111;width:67.69px;transform:scaleX(1.0583);transform-origin:left top;">Product</div><div class="a" style="left:318.8px;top:716.9px;width:241.2px;height:1.3px;background:#6f93d3"></div><div class="a" style="left:318.8px;top:724.2px;width:241.2px;height:33.299999999999955px;background:#b4c6e7;border:1px solid #8a8a8a;border-radius:4px;box-sizing:border-box;"></div><div class="t" style="left:330.39px;top:732.94px;font-size:17.44px;line-height:17.44px;font-weight:400;color:#111;width:43.75px;transform:scaleX(1.0419);transform-origin:left top;">Cello</div><div class="a" style="left:318.8px;top:763.3px;width:241.2px;height:33.700000000000045px;background:#b4c6e7;border:1px solid #8a8a8a;border-radius:4px;box-sizing:border-box;"></div><div class="t" style="left:330.38px;top:771.64px;font-size:17.44px;line-height:17.44px;font-weight:400;color:#111;width:51.49px;transform:scaleX(1.0605);transform-origin:left top;">Guitar</div><svg class="a" style="left:0;top:670px" width="600" height="50" viewBox="0 670 600 50"><path d="M208.30 690.40 L211.10 693.20 L216.70 687.60 M208.30 697.20 L211.10 700.00 L216.70 694.40 M208.30 704.00 L211.10 706.80 L216.70 701.20" fill="none" stroke="#555" stroke-width="1.4"/><line x1="219.30" y1="690.30" x2="229.90" y2="690.30" stroke="#555" stroke-width="1.5"/><line x1="219.30" y1="697.10" x2="229.90" y2="697.10" stroke="#555" stroke-width="1.5"/><line x1="219.30" y1="703.90" x2="229.90" y2="703.90" stroke="#555" stroke-width="1.5"/><path d="M251.80 687.20 L272.20 687.20 L272.20 690.60 L263.60 698.60 M251.80 687.20 L251.80 690.60 L259.60 698.60 L259.60 707.40" fill="#ffffff" stroke="#555" stroke-width="1.5"/><path d="M264.20 699.20 L272.40 707.40 M272.40 699.20 L264.20 707.40" stroke="#e8403a" stroke-width="1.4"/><path d="M491.00 692.80 L493.80 695.60 L499.40 690.00 M491.00 699.60 L493.80 702.40 L499.40 696.80 M491.00 706.40 L493.80 709.20 L499.40 703.60" fill="none" stroke="#555" stroke-width="1.4"/><line x1="502.00" y1="692.70" x2="512.60" y2="692.70" stroke="#555" stroke-width="1.5"/><line x1="502.00" y1="699.50" x2="512.60" y2="699.50" stroke="#555" stroke-width="1.5"/><line x1="502.00" y1="706.30" x2="512.60" y2="706.30" stroke="#555" stroke-width="1.5"/><path d="M534.40 689.40 L554.80 689.40 L554.80 692.80 L546.20 700.80 M534.40 689.40 L534.40 692.80 L542.20 700.80 L542.20 709.60" fill="#f0f0f0" stroke="#a8a8a8" stroke-width="1.5"/><path d="M546.80 701.40 L555.00 709.60 M555.00 701.40 L546.80 709.60" stroke="#b4b4b4" stroke-width="1.4"/></svg><div class="a" style="left:821px;top:64px;width:84.9px;height:54.5px;border:4.8px solid #ff1a1a;box-sizing:border-box"></div><svg class="a" style="left:760px;top:200px" width="110" height="110" viewBox="760 200 110 110"><path d="M773.8 216.3 L816 222.9 L808.8 230.6 L855 276.9 L834.4 297.5 L787.5 251.3 L779.8 258.5 Z" fill="#ff1a1a"/></svg></div>
</body></html>
